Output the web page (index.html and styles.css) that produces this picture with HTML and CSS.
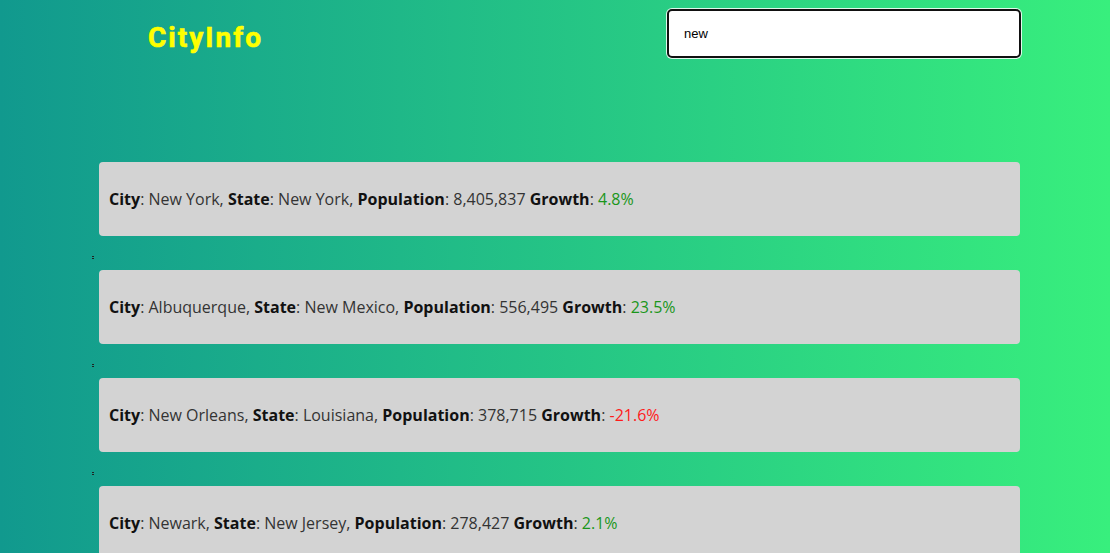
FILE: index.html
```html
<!DOCTYPE html>
<html>
<head>
<meta charset="utf-8">
<link rel="stylesheet" href="styles.css">
</head>
<body>
<header class="header">
  <h1 class="logo">CityInfo</h1>
  <input class="search" type="text" value="new">
</header>
<ul class="results">
  <li class="card"><p><b>City</b>: New York, <b>State</b>: New York, <b>Population</b>: 8,405,837 <b>Growth</b>: <span class="up">4.8%</span></p></li>
  <li class="sep"></li>
  <li class="card"><p><b>City</b>: Albuquerque, <b>State</b>: New Mexico, <b>Population</b>: 556,495 <b>Growth</b>: <span class="up">23.5%</span></p></li>
  <li class="sep"></li>
  <li class="card"><p><b>City</b>: New Orleans, <b>State</b>: Louisiana, <b>Population</b>: 378,715 <b>Growth</b>: <span class="down">-21.6%</span></p></li>
  <li class="sep"></li>
  <li class="card"><p><b>City</b>: Newark, <b>State</b>: New Jersey, <b>Population</b>: 278,427 <b>Growth</b>: <span class="up">2.1%</span></p></li>
</ul>
</body>
</html>
```
FILE: styles.css
```css
html {
  overflow: hidden;
  height: 100%;
}
body {
  margin: 0;
  min-height: 100%;
  background: linear-gradient(to right, #11998e, #38ef7d);
  font-family: "Open Sans", sans-serif;
}
.header {
  display: flex;
  justify-content: space-between;
  align-items: flex-start;
  padding: 9px 89px 0 148px;
  height: 162px;
  box-sizing: border-box;
}
.logo {
  margin: 9px 0 0;
  font-family: "Roboto", sans-serif;
  font-weight: 700;
  font-size: 28px;
  line-height: 40px;
  letter-spacing: 2px;
  -webkit-text-stroke: 0.6px #ffff00;
  color: #ffff00;
}
.search {
  width: 354px;
  height: 49px;
  box-sizing: border-box;
  border: 2px solid #111;
  border-radius: 5px;
  box-shadow: 0 0 0 1px rgba(255,255,255,0.85);
  padding: 0 15px;
  font-family: "Liberation Sans", Arial, sans-serif;
  font-size: 13px;
  color: #000;
  background: #fff;
  outline: none;
}
.results {
  list-style: none;
  margin: 0;
  padding: 0 0 0 99px;
  width: 921px;
  display: flex;
  flex-direction: column;
}
.card {
  background: #d3d3d3;
  border-radius: 4px;
  padding: 0 10px;
  display: flow-root;
  font-size: 16px;
  color: #333;
}
.card p {
  margin: 26px 0;
  line-height: 22px;
}
.card b {
  color: #111;
}
.up { color: #1a961a; }
.down { color: #ff1a1a; }
.sep {
  height: 34px;
  position: relative;
}
.sep::before {
  content: "";
  position: absolute;
  left: -7px;
  top: 20px;
  width: 2px;
  height: 1px;
  border-top: 1px solid #222;
  border-bottom: 1px solid #222;
}
```
